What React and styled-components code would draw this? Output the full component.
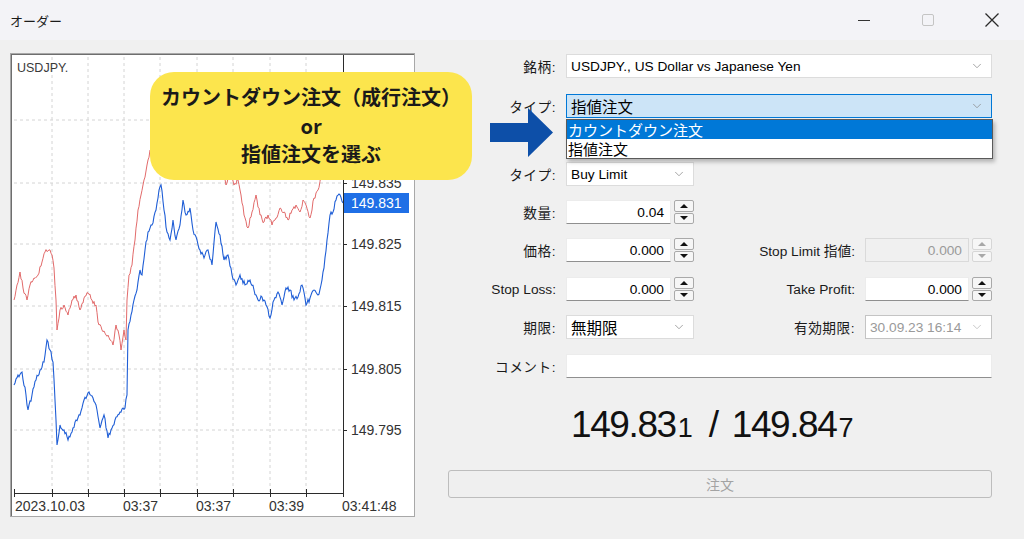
import React from "react";
import styled, { createGlobalStyle } from "styled-components";
import { ChevronDown } from "lucide-react";

const GlobalStyle = createGlobalStyle`
  html, body { margin: 0; padding: 0; }
  body {
    background: #f0f0f0;
    font-family: "Liberation Sans", "Noto Sans CJK JP", sans-serif;
    color: #000;
  }
  * { box-sizing: border-box; }
`;

const Window = styled.div`
  position: relative;
  width: 1024px;
  height: 539px;
  overflow: hidden;
  display: flex;
  flex-direction: column;
  background: #f0f0f0;
`;

const TitleBar = styled.div`
  height: 40px;
  flex: none;
  display: flex;
  align-items: center;
  justify-content: space-between;
  padding-left: 10px;
  background: #f3f3f7;
`;

const Title = styled.span`
  font-family: "Noto Sans CJK JP", sans-serif;
  font-size: 13px;
  color: #1b1b1b;
`;

const Controls = styled.div`
  display: flex;
  height: 100%;
`;

const CtrlButton = styled.div`
  width: 64px;
  height: 100%;
  display: flex;
  align-items: center;
  justify-content: center;
`;

const Body = styled.div`
  flex: 1;
  display: flex;
  align-items: flex-start;
  padding: 13px 32px 0 10px;
`;

const ChartFrame = styled.div`
  width: 405px;
  height: 464px;
  flex: none;
  background: #fff;
  border: 1px solid #a8a8a8;
  box-shadow: inset 1px 1px 0 #6e6e6e;
  svg { display: block; }
`;

const Form = styled.div`
  margin-left: 33px;
  width: 544px;
  display: flex;
  flex-direction: column;
  padding-top: 1px;
`;

const Row = styled.div`
  display: grid;
  grid-template-columns: 108px 128px 151px 127px;
  column-gap: 10px;
  height: 24px;
  align-items: center;
  margin-top: ${(p) => p.$mt || 0}px;
`;

const Label = styled.div`
  justify-self: end;
  font-size: 13.7px;
  white-space: nowrap;
  color: #1a1a1a;
  font-family: "Liberation Sans", "Noto Sans CJK JP", sans-serif;
  letter-spacing: ${(p) => (p.$cjk ? "0.5px" : "0")};
`;

const Field = styled.div`
  position: relative;
  grid-column: ${(p) => p.$span || "auto"};
  height: 24px;
  display: flex;
  gap: 3px;
`;

const SelectBox = styled.div`
  flex: 1;
  height: 24px;
  display: flex;
  align-items: center;
  justify-content: space-between;
  padding: 0 7px 0 4px;
  background: ${(p) => (p.$active ? "#cce4f7" : "#fff")};
  border: 1px solid ${(p) => (p.$active ? "#0078d7" : p.$disabled ? "#c4c4c4" : "#dcdcdc")};
  font-size: ${(p) => (p.$cjk ? "15.5px" : "13.7px")};
  color: ${(p) => (p.$disabled ? "#9a9a9a" : "#000")};
  white-space: nowrap;
  font-family: "Liberation Sans", "Noto Sans CJK JP", sans-serif;
`;

const NumInput = styled.div`
  flex: 1;
  height: 24px;
  display: flex;
  align-items: center;
  justify-content: flex-end;
  padding-right: 6px;
  background: ${(p) => (p.$disabled ? "#f0f0f0" : "#fff")};
  border: 1px solid ${(p) => (p.$disabled ? "#dadada" : "#ececec")};
  border-bottom-color: ${(p) => (p.$disabled ? "#dadada" : "#8f8f8f")};
  font-size: 13.7px;
  color: ${(p) => (p.$disabled ? "#9a9a9a" : "#000")};
`;

const Spinner = styled.div`
  width: 20px;
  height: 24px;
  flex: none;
  display: flex;
  flex-direction: column;
  gap: 1px;
`;

const SpinHalf = styled.div`
  flex: 1;
  display: flex;
  align-items: center;
  justify-content: center;
  background: #f6f6f6;
  border: 1px solid ${(p) => (p.$disabled ? "#d6d6d6" : "#a9a9a9")};
  border-radius: 2px;
`;

const Tri = styled.span`
  width: 0;
  height: 0;
  border-left: 4px solid transparent;
  border-right: 4px solid transparent;
  ${(p) =>
    p.$up
      ? `border-bottom: 4px solid ${p.$disabled ? "#a8a8a8" : "#111"};`
      : `border-top: 4px solid ${p.$disabled ? "#a8a8a8" : "#111"};`}
`;

const Dropdown = styled.div`
  position: absolute;
  left: 0;
  top: 25px;
  width: 427px;
  background: #fff;
  border: 1px solid #5a5a5a;
  box-shadow: 2px 3px 4px rgba(0, 0, 0, 0.25);
  z-index: 5;
`;

const DropItem = styled.div`
  height: 19px;
  line-height: 19px;
  overflow: hidden;
  padding-left: 1px;
  font-family: "Noto Sans CJK JP", sans-serif;
  font-size: 15px;
  background: ${(p) => (p.$selected ? "#0078d7" : "#fff")};
  color: ${(p) => (p.$selected ? "#fff" : "#000")};
`;

const PriceLine = styled.div`
  margin-top: 26px;
  height: 42px;
  padding-left: 123px;
  display: flex;
  align-items: baseline;
  font-family: "Liberation Sans", sans-serif;
  font-size: 37px;
  letter-spacing: -1.4px;
  color: #111;
`;

const SmallDigit = styled.span`
  font-size: 27px;
  letter-spacing: 0;
  margin-left: 2px;
`;

const Slash = styled.span`
  margin: 0 14px 0 16px;
`;

const OrderButton = styled.div`
  margin-top: 24px;
  height: 28px;
  display: flex;
  align-items: center;
  justify-content: center;
  border: 1px solid #bdbdbd;
  border-radius: 3px;
  background: #efefef;
  color: #a3a3a3;
  font-family: "Noto Sans CJK JP", sans-serif;
  font-size: 14px;
`;

const Callout = styled.div`
  position: absolute;
  left: 150px;
  top: 72px;
  width: 322px;
  height: 108px;
  border-radius: 24px;
  background: #fce54d;
  display: flex;
  flex-direction: column;
  align-items: center;
  justify-content: center;
  font-family: "Noto Sans CJK JP", sans-serif;
  font-weight: 700;
  font-size: 20px;
  line-height: 28.5px;
  color: #1a1a1a;
  z-index: 4;
`;

const ArrowWrap = styled.div`
  position: absolute;
  left: 490px;
  top: 107px;
  z-index: 6;
  svg { display: block; }
`;

/* ---------- chart data ---------- */
function makeLine(points, seed, amp) {
  let s = seed;
  const rnd = () => {
    s = (s * 1103515245 + 12345) % 2147483648;
    return s / 2147483648;
  };
  const out = [];
  for (let i = 0; i < points.length - 1; i++) {
    const [x0, y0] = points[i];
    const [x1, y1] = points[i + 1];
    const steps = Math.max(1, Math.round((x1 - x0) / 1));
    for (let k = 0; k < steps; k++) {
      const t = k / steps;
      const x = x0 + (x1 - x0) * t;
      const y = y0 + (y1 - y0) * t + (k === 0 ? 0 : (rnd() - 0.5) * amp);
      out.push(`${x.toFixed(1)},${y.toFixed(1)}`);
    }
  }
  const last = points[points.length - 1];
  out.push(`${last[0]},${last[1]}`);
  return out.join(" ");
}

const bluePts = [[14,385],[18,375],[22,372],[26,395],[28,410],[32,395],[36,380],[40,370],[44,362],[47,340],[50,350],[53,362],[55,400],[57,445],[60,425],[64,430],[68,440],[72,432],[76,420],[80,415],[84,400],[89,392],[93,398],[97,410],[100,428],[104,415],[108,438],[111,430],[115,420],[120,412],[125,408],[127,395],[128,330],[131,315],[134,300],[137,290],[140,270],[142,275],[145,250],[148,232],[152,225],[156,210],[159,190],[161,185],[164,210],[167,232],[170,240],[173,220],[176,240],[180,225],[183,200],[186,215],[190,208],[193,230],[197,240],[200,250],[204,258],[208,250],[212,265],[216,222],[220,235],[224,260],[228,255],[232,275],[236,285],[240,275],[245,285],[250,280],[254,290],[258,300],[262,297],[266,305],[270,318],[274,300],[278,292],[282,305],[286,288],[290,290],[294,300],[298,297],[302,285],[306,305],[310,298],[314,290],[318,295],[321,285],[324,268],[327,240],[330,215],[333,212],[336,200],[339,194],[343,203]];

const redPts = [[14,300],[17,285],[20,272],[23,288],[27,300],[30,285],[34,278],[38,275],[42,262],[45,252],[49,250],[52,255],[54,268],[56,300],[57,330],[60,310],[64,305],[68,315],[72,300],[76,295],[80,310],[84,298],[88,293],[92,300],[96,305],[98,322],[102,330],[106,335],[110,340],[113,345],[116,325],[119,335],[121,350],[124,330],[126,340],[127,300],[129,275],[132,265],[135,240],[138,210],[141,195],[144,180],[147,165],[150,150],[170,120],[200,130],[222,160],[226,185],[230,170],[234,185],[238,180],[241,195],[244,215],[248,228],[252,212],[256,195],[260,215],[264,222],[268,215],[272,225],[276,218],[280,208],[284,212],[288,220],[292,210],[296,205],[300,212],[303,200],[306,205],[310,218],[314,198],[318,190],[321,175],[324,160],[328,140],[335,120],[343,125]];

const vGrid = [52, 88, 124, 160, 197, 233, 270, 306];
const hGrid = [120, 183, 244, 306, 369, 430];
const priceLabels = [
  [183, "149.835"],
  [244, "149.825"],
  [306, "149.815"],
  [369, "149.805"],
  [430, "149.795"],
];
const timeLabels = [
  [15, "2023.10.03"],
  [123, "03:37"],
  [196, "03:37"],
  [269, "03:39"],
  [342, "03:41:48"],
];

function Chart() {
  const blue = makeLine(bluePts, 7, 5);
  const red = makeLine(redPts, 19, 5);
  return (
    <svg width="403" height="462" viewBox="11 54 403 462" fontFamily="Liberation Sans, sans-serif">
      {vGrid.map((x) => (
        <line key={"v" + x} x1={x} y1={57} x2={x} y2={493} stroke="#d4d4d4" strokeDasharray="3 3" />
      ))}
      {hGrid.map((y) => (
        <line key={"h" + y} x1={14} y1={y} x2={343} y2={y} stroke="#d4d4d4" strokeDasharray="3 3" />
      ))}
      <polyline points={red} fill="none" stroke="#e26b6b" strokeWidth="1" />
      <polyline points={blue} fill="none" stroke="#1f5ed6" strokeWidth="1.1" />
      <line x1={343.5} y1={55} x2={343.5} y2={493.5} stroke="#2b2b2b" />
      <line x1={14} y1={493.5} x2={344} y2={493.5} stroke="#2b2b2b" />
      {[14, ...vGrid, 343].map((x) => (
        <line key={"t" + x} x1={x + 0.5} y1={489} x2={x + 0.5} y2={497} stroke="#2b2b2b" />
      ))}
      {hGrid.map((y) => (
        <line key={"pt" + y} x1={343} y1={y + 0.5} x2={347} y2={y + 0.5} stroke="#2b2b2b" />
      ))}
      <text x={17} y={72} fontSize="12.5" fill="#3a3a3a">USDJPY.</text>
      {priceLabels.map(([y, t]) => (
        <text key={t} x={351} y={y + 5} fontSize="14" fill="#333">{t}</text>
      ))}
      <rect x={344} y={193} width={65} height={20} fill="#1f6fe6" />
      <text x={351} y={208} fontSize="14" fill="#fff">149.831</text>
      {timeLabels.map(([x, t], i) => (
        <text key={i} x={x} y={511} fontSize="14" fill="#333">{t}</text>
      ))}
    </svg>
  );
}

function Spin({ disabled }) {
  return (
    <Spinner>
      <SpinHalf $disabled={disabled}><Tri $up $disabled={disabled} /></SpinHalf>
      <SpinHalf $disabled={disabled}><Tri $disabled={disabled} /></SpinHalf>
    </Spinner>
  );
}

function Select({ children, cjk, active, disabled, span, dropdown }) {
  return (
    <Field $span={span}>
      <SelectBox $cjk={cjk} $active={active} $disabled={disabled}>
        <span>{children}</span>
        <ChevronDown size={14} strokeWidth={1.3} color={disabled ? "#b8b8b8" : "#8a8a8a"} />
      </SelectBox>
      {dropdown}
    </Field>
  );
}

function Num({ value, disabled }) {
  return (
    <Field>
      <NumInput $disabled={disabled}>{value}</NumInput>
      <Spin disabled={disabled} />
    </Field>
  );
}

export default function App() {
  return (
    <>
      <GlobalStyle />
      <Window>
        <TitleBar>
          <Title>オーダー</Title>
          <Controls>
            <CtrlButton>
              <svg width="14" height="14" viewBox="0 0 14 14"><line x1="1" y1="7.5" x2="13" y2="7.5" stroke="#333" strokeWidth="1" /></svg>
            </CtrlButton>
            <CtrlButton>
              <svg width="14" height="14" viewBox="0 0 14 14"><rect x="1.5" y="1.5" width="11" height="11" rx="1.5" fill="none" stroke="#c4c4c4" strokeWidth="1" /></svg>
            </CtrlButton>
            <CtrlButton>
              <svg width="16" height="16" viewBox="0 0 16 16"><path d="M1.5 1.5 L14.5 14.5 M14.5 1.5 L1.5 14.5" stroke="#2a2a2a" strokeWidth="1.3" /></svg>
            </CtrlButton>
          </Controls>
        </TitleBar>
        <Body>
          <ChartFrame>
            <Chart />
          </ChartFrame>
          <Form>
            <Row>
              <Label $cjk>銘柄:</Label>
              <Select span="2 / -1">USDJPY., US Dollar vs Japanese Yen</Select>
            </Row>
            <Row $mt={16}>
              <Label $cjk>タイプ:</Label>
              <Select
                span="2 / -1"
                cjk
                active
                dropdown={
                  <Dropdown>
                    <DropItem $selected>カウントダウン注文</DropItem>
                    <DropItem>指値注文</DropItem>
                  </Dropdown>
                }
              >
                指値注文
              </Select>
            </Row>
            <Row $mt={44}>
              <Label $cjk>タイプ:</Label>
              <Select>Buy Limit</Select>
            </Row>
            <Row $mt={14}>
              <Label $cjk>数量:</Label>
              <Num value="0.04" />
            </Row>
            <Row $mt={14}>
              <Label $cjk>価格:</Label>
              <Num value="0.000" />
              <Label>Stop Limit 指値:</Label>
              <Num value="0.000" disabled />
            </Row>
            <Row $mt={15}>
              <Label>Stop Loss:</Label>
              <Num value="0.000" />
              <Label>Take Profit:</Label>
              <Num value="0.000" />
            </Row>
            <Row $mt={14}>
              <Label $cjk>期限:</Label>
              <Select cjk>無期限</Select>
              <Label $cjk>有効期限:</Label>
              <Select disabled>30.09.23 16:14</Select>
            </Row>
            <Row $mt={15}>
              <Label $cjk>コメント:</Label>
              <Field $span="2 / -1">
                <NumInput />
              </Field>
            </Row>
            <PriceLine>
              149.83<SmallDigit>1</SmallDigit>
              <Slash>/</Slash>
              149.84<SmallDigit>7</SmallDigit>
            </PriceLine>
            <OrderButton>注文</OrderButton>
          </Form>
        </Body>
        <Callout>
          <div>カウントダウン注文（成行注文）</div>
          <div>or</div>
          <div>指値注文を選ぶ</div>
        </Callout>
        <ArrowWrap>
          <svg width="64" height="51" viewBox="0 0 64 51">
            <path d="M0 16 H38 V1 L63 25.5 L38 50 V35 H0 Z" fill="#0d4fa8" />
          </svg>
        </ArrowWrap>
      </Window>
    </>
  );
}
